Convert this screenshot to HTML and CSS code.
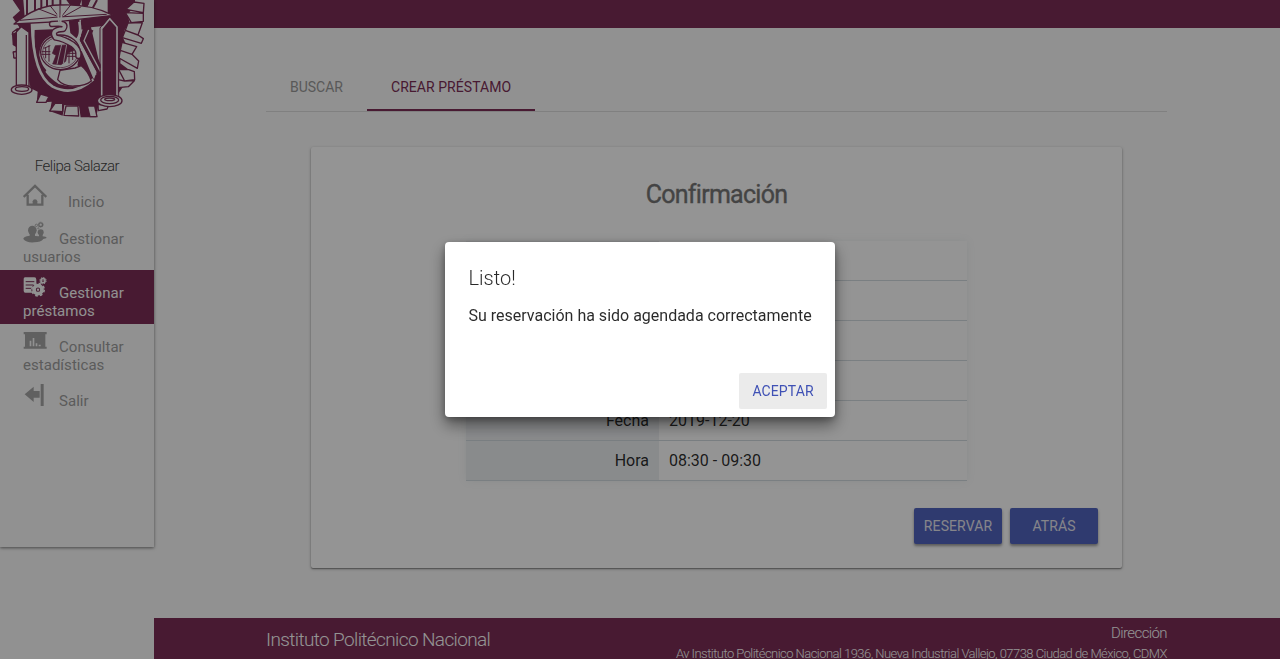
FILE: index.html
```
<!DOCTYPE html>
<html lang="es">
<head>
<meta charset="utf-8">
<title>Crear préstamo</title>
<link rel="stylesheet" href="styles.css">
</head>
<body>
<div class="page">
  <aside class="sidebar">
    <svg class="crest" viewBox="0 0 480 375" fill="none" stroke="#7c2e56" stroke-width="4" stroke-linejoin="round">
      <!-- Gear body -->
      <path fill="#7c2e56" stroke="none" d="M38 0H405V20L382 42 388 65 374 90 369 113 380 137 363 155 361 190 385 208 355 216 357 250 368 262 350 288 325 318 294 322 289 352H242L237 318 193 315 188 347 150 334 155 305 110 308 113 275 92 265 86 237 59 228 57 200 76 176 40 174 38 155 60 148 38 135 36 105 58 82 38 52 60 32Z"/>
      <!-- Bevelled teeth -->
      <g fill="#fafafa">
        <path d="M402 6 432 10 430 38 378 28Z M376 38 394 68 430 64 430 40Z M384 69 376 91 414 105 427 68Z M376 91 367 113 424 130 430 116 414 105Z M366 127 361 151 396 163 410 140Z M361 151 357 174 412 205 416 183 396 163Z M356 209 374 243 404 239 403 215 386 209Z M354 239 355 263 385 260 403 242 374 243Z"/>
        <path d="M122 282 110 307 138 307 147 290Z M165 310 149 333 188 335 188 310Z M198 318 192 346 236 348 234 318Z M262 318 270 350 291 350 284 318Z M294 314 295 332 321 327 327 314Z M61 184 72 194 57 200 56 184Z M40 156 42 174 60 174 54 154Z M66 211 61 227 84 236 86 218Z M37 104 52 96 52 86 38 97Z"/>
      </g>
      <!-- Inner shield -->
      <path fill="#fafafa" stroke="none" d="M70 0H245L246 58 323 45 323 0H268L254 25 242 65Q245 100 238 120L290 216 282 238 244 190Q270 225 273 246Q238 270 176 252Q126 220 105 155Q96 120 95 70L74 50Z"/>
      <path fill="#7c2e56" stroke="none" d="M104 90 158 88 160 105Q120 116 118 166Q124 196 139 211L130 227Q100 180 104 90Z M205 52 238 60Q245 90 235 120L211 99Z M230 135 246 155 281 238 270 247Q264 218 232 196Q242 165 230 135Z M199 0H245L230 42Z M255 0H272L252 40Z"/>
      <path fill="#fafafa" stroke="none" d="M273 82 325 76Q328 150 304 215Z"/>
      <path stroke="#fafafa" stroke-width="8" d="M96 70Q99 225 158 260Q220 292 280 238M238 65Q247 115 223 122"/>
      <path stroke-width="6" d="M81 0V50M105 0V40M124 0V36M141 0V30M158 0V28M181 0V20M265 8 250 40M291 0 277 26"/>
      <path stroke-width="7" d="M256 90 244 121 296 218M277 90 262 122 304 204"/>
      <path stroke="#fafafa" stroke-width="4" d="M246 88 236 120 288 224M266 90 252 122 301 214"/>
      <path stroke-width="5" d="M248 76H303"/>
      <!-- Balance beam and rays -->
      <path fill="#fafafa" d="M42 72Q112 14 180 15Q270 10 340 46L176 65Z"/>
      <path d="M60 61 175 51 320 43M114 26 170 48M150 17 176 49M180 16V50M212 15 185 49M244 20 190 50" stroke-width="3"/>
      <!-- Flask -->
      <path fill="#fafafa" d="M180 211 173 239Q190 260 224 258Q258 257 274 243Q265 214 244 197L225 204Z"/>
      <!-- Globe -->
      <ellipse cx="181" cy="157" rx="59" ry="52" fill="#fafafa"/>
      <ellipse cx="181" cy="157" rx="53" ry="46" stroke-width="2"/>
      <path fill="#7c2e56" stroke-width="2" d="M166 137 211 134 222 151 203 159 197 184 183 194 158 192 168 166 157 160Z"/>
      <path stroke-width="3" d="M125 155H151M124 163H151M131 145 151 137M137 143V175M147 136V185M198 160H234M201 169H228M218 137V180M207 138V190"/>
      <path stroke="#fafafa" stroke-width="2.5" d="M185 134 171 193M200 134 190 190"/>
      <!-- Serpent -->
      <path stroke-width="19" stroke-linecap="round" d="M156 72Q205 66 190 87Q150 89 167 113Q190 116 219 134Q238 148 235 168"/>
      <path stroke="#fafafa" stroke-width="11" stroke-linecap="round" d="M156 72Q205 66 190 87Q150 89 167 113Q190 116 219 134Q238 148 235 168"/>
      <path stroke="#fafafa" stroke-width="5" d="M172 26 177 66M187 26 182 66"/>
      <!-- Scales -->
      <path fill="#fafafa" d="M49 264V96L64 80 87 97V263"/>
      <path stroke-width="4" d="M79 105V258"/>
      <path fill="#7c2e56" stroke="#fafafa" stroke-width="5" d="M305 290V86L329 56 351 81V294"/>
      <path d="M300 292V84L329 50 356 79V294" stroke-width="3"/>
      <ellipse cx="65" cy="269" rx="31" ry="14" fill="#fafafa"/><ellipse cx="66" cy="267" rx="20" ry="7"/>
      <ellipse cx="329" cy="302" rx="37" ry="18" fill="#fafafa"/><ellipse cx="329" cy="300" rx="27" ry="11"/><ellipse cx="329" cy="298" rx="15" ry="4"/>
    </svg>
    <div class="user">Felipa Salazar</div>
    <nav class="menu">
      <a class="item item-home">
        <span class="row"><svg class="icon" viewBox="0 0 72 72"><path fill="none" stroke="currentColor" stroke-width="7" d="M2 42 36 9 70 42M14 35V65H58V35"/><path d="M29 65V55Q30 49 36 49T43 55V65Z"/></svg><span>Inicio</span></span>
      </a>
      <a class="item">
        <span class="row"><svg class="icon" viewBox="0 0 72 72"><ellipse cx="28" cy="31" rx="13" ry="14"/><path d="M20 38H36V48Q51 48 55 51L58 49Q70 50 71 54 67 56 61 57 54 67 34 67 10 69 1 57 0 50 20 47Z"/><ellipse cx="53" cy="37" rx="9" ry="9"/><path d="M48 42H59V53H48Z"/><g fill="none" stroke="currentColor"><circle cx="53" cy="14" r="5.5" stroke-width="4"/><circle cx="53" cy="14" r="8" stroke-width="2" stroke-dasharray="3 3"/><circle cx="40" cy="16" r="3.5" stroke-width="2.5"/><circle cx="46" cy="25" r="2" stroke-width="2"/></g></svg><span>Gestionar</span></span>
        <span>usuarios</span>
      </a>
      <a class="item active">
        <span class="row"><svg class="icon" viewBox="0 0 72 72"><path d="M6 10H34Q40 10 40 17V50Q40 56 33 56H7Q2 56 2 50V15Q2 10 6 10Z"/><path stroke="#7c2e56" stroke-width="3" d="M8 23H34M8 33H31M8 43H28"/><circle cx="45" cy="47" r="20" fill="#7c2e56"/><circle cx="45" cy="47" r="12" fill="none" stroke="currentColor" stroke-width="11"/><circle cx="45" cy="47" r="18.5" fill="none" stroke="currentColor" stroke-width="5" stroke-dasharray="8 6.5"/><circle cx="45" cy="47" r="3.5"/><circle cx="60" cy="20" r="6" fill="none" stroke="currentColor" stroke-width="5"/><circle cx="60" cy="20" r="9.5" fill="none" stroke="currentColor" stroke-width="3" stroke-dasharray="4 3.4"/><circle cx="60" cy="20" r="2"/></svg><span>Gestionar</span></span>
        <span>préstamos</span>
      </a>
      <a class="item">
        <span class="row"><svg class="icon" viewBox="0 0 72 72"><path d="M2 12H71V19H67V56H71V62H2V56H6V19H2Z"/><path fill="#fafafa" d="M20 38H25V55H20ZM29 30H34V55H29ZM38 46H43V55H38ZM47 50H53V55H47Z"/></svg><span>Consultar</span></span>
        <span>estadísticas</span>
      </a>
      <a class="item">
        <span class="row"><svg class="icon" viewBox="0 0 72 72"><path d="M5 37 32 14V27H50V47H32V60ZM53 6H62V72H53Z"/></svg><span>Salir</span></span>
      </a>
    </nav>
  </aside>

  <div class="content">
    <header class="topbar"></header>
    <main class="main">
      <div class="tabs">
        <a class="tab">BUSCAR</a>
        <a class="tab selected">CREAR PRÉSTAMO</a>
      </div>
      <section class="card">
        <h1 class="heading">Confirmación</h1>
        <div class="table">
          <div class="tr"><div class="th"></div><div class="td"></div></div>
          <div class="tr"><div class="th"></div><div class="td"></div></div>
          <div class="tr"><div class="th"></div><div class="td"></div></div>
          <div class="tr"><div class="th"></div><div class="td"></div></div>
          <div class="tr"><div class="th">Fecha</div><div class="td">2019-12-20</div></div>
          <div class="tr"><div class="th">Hora</div><div class="td">08:30 - 09:30</div></div>
        </div>
        <div class="actions">
          <button class="btn">RESERVAR</button>
          <button class="btn">ATRÁS</button>
        </div>
      </section>
    </main>
    <footer class="footer">
      <div class="institute">Instituto Politécnico Nacional</div>
      <div class="address">
        <div class="address-title">Dirección</div>
        <div class="address-line">Av Instituto Politécnico Nacional 1936, Nueva Industrial Vallejo, 07738 Ciudad de México, CDMX</div>
      </div>
    </footer>
  </div>
</div>

<div class="overlay">
  <div class="dialog">
    <h2 class="dialog-title">Listo!</h2>
    <p class="dialog-text">Su reservación ha sido agendada correctamente</p>
    <button class="accept">ACEPTAR</button>
  </div>
</div>
</body>
</html>
```

FILE: styles.css
```
* { box-sizing: border-box; }
body {
  margin: 0;
  height: 659px;
  overflow: hidden;
  background: #fafafa;
  font-family: Roboto, "Liberation Sans", sans-serif;
  color: rgba(0, 0, 0, .84);
}
button { font-family: inherit; border: 0; padding: 0; }
.page { display: flex; height: 659px; }

.sidebar {
  width: 154px;
  height: 547px;
  flex: none;
  z-index: 1;
  background: #fafafa;
  box-shadow: 0 1px 3px rgba(0, 0, 0, .5);
}
.crest { display: block; width: 160px; height: 125px; margin-right: -6px; clip-path: inset(0 6px 0 0); }
.user {
  margin-top: 29px;
  height: 25px;
  line-height: 24px;
  text-align: center;
  font-size: 15px;
  font-weight: 300;
  letter-spacing: -.52px;
  color: #444;
}
.item {
  display: block;
  height: 54px;
  padding: 4px 0 0 23px;
  font-size: 15px;
  line-height: 18px;
  letter-spacing: .03px;
  color: #9e9e9e;
}
.item > span { display: block; }
.item .row { display: flex; height: 28px; gap: 12px; align-items: flex-end; }
.item-home { height: 37px; }
.item-home .row { gap: 21px; }
.icon { width: 24px; height: 24px; align-self: flex-start; fill: currentColor; color: #a6a6a6; }
.active { background: #7c2e56; color: #fafafa; }
.active .icon { color: #fafafa; }

.content { flex: 1; display: flex; flex-direction: column; }
.topbar { height: 28px; background: #7c2e56; flex: none; }
.main { height: 590px; flex: none; padding: 35px 113px 0 112px; }
.tabs { display: flex; height: 49px; border-bottom: 1px solid #ddd; }
.tab {
  height: 48px;
  padding: 0 24px;
  font-size: 14px;
  line-height: 49px;
  color: #999;
}
.selected { letter-spacing: .05px; color: #7c2e56; border-bottom: 2px solid #7c2e56; }
.card {
  margin: 35px 45px 0;
  height: 421px;
  padding: 31px 24px 24px;
  border-radius: 2px;
  background: #fff;
  box-shadow: 0 1px 3px rgba(0, 0, 0, .35), 0 1px 1px rgba(0, 0, 0, .25);
}
.heading {
  margin: 0;
  height: 34px;
  line-height: 34px;
  text-align: center;
  font-size: 25px;
  font-weight: 400;
  letter-spacing: -.72px;
  color: #757575;
  -webkit-text-stroke: .35px #757575;
}
.table { width: 501px; margin: 29px auto 27px; box-shadow: 0 0 8px rgba(120, 150, 160, .12); }
.tr { display: grid; grid-template-columns: 193px 1fr; height: 40px; border-bottom: 1px solid #d3dbe0; line-height: 39px; font-size: 16px; }
.th { background: #edeff2; text-align: right; padding-right: 10px; }
.td { padding-left: 10px; }
.actions { display: flex; justify-content: flex-end; gap: 8px; }
.btn {
  width: 88px;
  height: 36px;
  border-radius: 2px;
  background: #5264c0;
  color: #e6e6ee;
  font-size: 14px;
  letter-spacing: .1px;
  box-shadow: 0 2px 3px rgba(0, 0, 0, .4);
}
.footer {
  flex: 1;
  display: flex;
  justify-content: space-between;
  padding: 0 113px 0 112px;
  background: #7c2e56;
  color: #fff;
  font-weight: 300;
  overflow: hidden;
}
.institute { font-size: 19px; line-height: 44px; letter-spacing: -.62px; }
.address { text-align: right; padding-top: 5px; }
.address-title { font-size: 15px; line-height: 20px; letter-spacing: -.6px; }
.address-line { font-size: 13px; line-height: 22px; letter-spacing: -.545px; }

.overlay {
  position: fixed;
  inset: 0;
  z-index: 2;
  display: grid;
  place-items: center;
  background: rgba(0, 0, 0, .42);
}
.dialog {
  display: flex;
  flex-direction: column;
  width: 390px;
  height: 175px;
  padding: 24px 8px 8px 23.5px;
  background: #fff;
  border-radius: 4px;
  box-shadow: 0 8px 16px rgba(0, 0, 0, .45), 0 2px 6px rgba(0, 0, 0, .25);
}
.dialog-title { margin: 0; font-size: 20px; line-height: 25px; font-weight: 300; }
.dialog-text { margin: 15px 0 0; font-size: 16px; line-height: 20px; }
.accept {
  align-self: flex-end;
  margin-top: auto;
  width: 88px;
  height: 36px;
  background: #ebebeb;
  border-radius: 2px;
  color: #3f51b5;
  font-size: 14px;
  letter-spacing: .1px;
}
```
